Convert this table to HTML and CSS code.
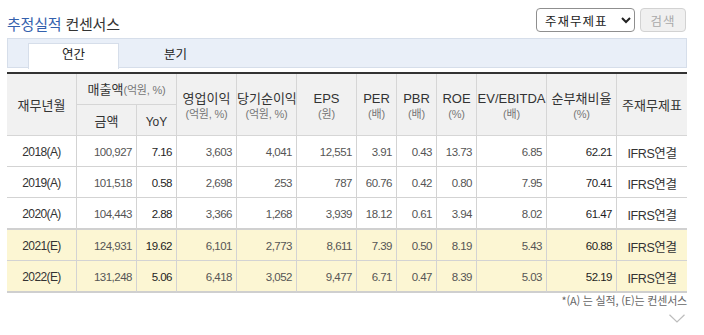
FILE: index.html
```html
<!DOCTYPE html>
<html lang="ko">
<head>
<meta charset="utf-8">
<title>추정실적 컨센서스</title>
<link rel="stylesheet" href="styles.css">
</head>
<body>
<div class="wrap">
  <div class="head">
    <h2 class="title"><span class="accent">추정실적</span> 컨센서스</h2>
    <div class="controls">
      <select class="sel">
        <option>주재무제표</option>
        <option>IFRS연결</option>
        <option>IFRS별도</option>
      </select>
      <button class="btn" type="button" disabled>검색</button>
    </div>
  </div>

  <div class="tabs">
    <a class="tab active">연간</a>
    <a class="tab">분기</a>
  </div>

  <table class="grid">
    <colgroup>
      <col class="w70"><col class="w60"><col class="w40"><col class="w60"><col class="w60"><col class="w60">
      <col class="w40"><col class="w40"><col class="w40"><col class="w70"><col class="w70"><col class="w70">
    </colgroup>
    <thead>
      <tr class="h1">
        <th rowspan="2">재무년월</th>
        <th colspan="2">매출액<span class="unit-in">(억원, %)</span></th>
        <th rowspan="2">영업이익<span class="unit">(억원, %)</span></th>
        <th rowspan="2">당기순이익<span class="unit">(억원, %)</span></th>
        <th rowspan="2">EPS<span class="unit">(원)</span></th>
        <th rowspan="2">PER<span class="unit">(배)</span></th>
        <th rowspan="2">PBR<span class="unit">(배)</span></th>
        <th rowspan="2">ROE<span class="unit">(%)</span></th>
        <th rowspan="2">EV/EBITDA<span class="unit">(배)</span></th>
        <th rowspan="2">순부채비율<span class="unit">(%)</span></th>
        <th rowspan="2" class="last">주재무제표</th>
      </tr>
      <tr class="h2">
        <th>금액</th>
        <th class="sm">YoY</th>
      </tr>
    </thead>
    <tbody>
      <tr>
        <td class="yr">2018(A)</td><td>100,927</td><td class="dk">7.16</td><td>3,603</td><td>4,041</td><td>12,551</td>
        <td>3.91</td><td>0.43</td><td>13.73</td><td>6.85</td><td class="dk">62.21</td><td class="std">IFRS연결</td>
      </tr>
      <tr>
        <td class="yr">2019(A)</td><td>101,518</td><td class="dk">0.58</td><td>2,698</td><td>253</td><td>787</td>
        <td>60.76</td><td>0.42</td><td>0.80</td><td>7.95</td><td class="dk">70.41</td><td class="std">IFRS연결</td>
      </tr>
      <tr class="split">
        <td class="yr">2020(A)</td><td>104,443</td><td class="dk">2.88</td><td>3,366</td><td>1,268</td><td>3,939</td>
        <td>18.12</td><td>0.61</td><td>3.94</td><td>8.02</td><td class="dk">61.47</td><td class="std">IFRS연결</td>
      </tr>
      <tr class="est">
        <td class="yr">2021(E)</td><td>124,931</td><td class="dk">19.62</td><td>6,101</td><td>2,773</td><td>8,611</td>
        <td>7.39</td><td>0.50</td><td>8.19</td><td>5.43</td><td class="dk">60.88</td><td class="std">IFRS연결</td>
      </tr>
      <tr class="est end">
        <td class="yr">2022(E)</td><td>131,248</td><td class="dk">5.06</td><td>6,418</td><td>3,052</td><td>9,477</td>
        <td>6.71</td><td>0.47</td><td>8.39</td><td>5.03</td><td class="dk">52.19</td><td class="std">IFRS연결</td>
      </tr>
    </tbody>
  </table>

  <p class="note">*(A) 는 실적, (E)는 컨센서스</p>
  <div class="more">
    <svg width="16" height="9" viewBox="0 0 16 9" aria-hidden="true">
      <polyline points="0.5,0.8 8,8 15.5,0.8" fill="none" stroke="#bdbdbd" stroke-width="1.2"/>
    </svg>
  </div>
</div>
</body>
</html>
```

FILE: styles.css
```css
* { box-sizing: border-box; }

html, body {
  margin: 0;
  padding: 0;
  background: #fff;
}

body {
  font-family: "Noto Sans CJK KR", "Noto Sans", sans-serif;
  color: #333;
  font-size: 12px;
}

.wrap {
  width: 680px;
  margin-left: 7px;
  padding-top: 8px;
}

.head {
  display: flex;
  justify-content: space-between;
  align-items: flex-end;
  height: 24px;
}

.title {
  margin: 0 0 -1px 0;
  font-size: 15px;
  line-height: 18px;
  font-weight: normal;
  letter-spacing: -0.2px;
  color: #333;
}

.title .accent {
  color: #3461ad;
}

.controls {
  display: flex;
  gap: 5px;
  align-self: stretch;
  margin-right: 1px;
}

.sel {
  width: 99px;
  height: 24px;
  font-family: "Noto Sans CJK KR", sans-serif;
  font-size: 12.5px;
  color: #222;
  border: 1px solid #8f8f8f;
  border-radius: 4px;
  background: #fff;
  padding: 0 2px 0 4px;
  letter-spacing: 1px;
}

.btn {
  width: 46px;
  height: 24px;
  font-family: "Noto Sans CJK KR", sans-serif;
  font-size: 12.5px;
  color: #a9a9a9;
  background: #f0f0f0;
  border: 1px solid #d2d2d2;
  border-radius: 4px;
  padding: 0;
  letter-spacing: 1px;
}

.tabs {
  display: flex;
  gap: 11px;
  margin-top: 6px;
  height: 30px;
  padding: 4px 0 0 20px;
  background: #e9eff8;
  border: 1px solid #d6deea;
}

.tab {
  width: 91px;
  height: 26px;
  margin-bottom: -1px;
  text-align: center;
  font-size: 12.5px;
  line-height: 20px;
  color: #222;
  border: 1px solid transparent;
  border-bottom: 0;
}

.tab.active {
  background: #fff;
  border-color: #d6deea;
}

.grid {
  margin-top: 4px;
  width: 680px;
  table-layout: fixed;
  border-collapse: separate;
  border-spacing: 0;
  border-top: 2px solid #333;
  font-family: "Liberation Sans", "Noto Sans CJK KR", sans-serif;
}

.w40 { width: 40px; }
.w60 { width: 60px; }
.w70 { width: 70px; }

.grid th {
  background: #f1f1f1;
  font-weight: normal;
  color: #333;
  font-size: 13px;
  line-height: 14px;
  padding: 1px 0 0;
  text-align: center;
  border-right: 1px solid #d6d6d6;
  border-bottom: 1px solid #d6d6d6;
  font-family: "Liberation Sans", "Noto Sans CJK KR", sans-serif;
  white-space: nowrap;
}

.grid th.last { border-right: 0; }
.grid th.sm { font-size: 12px; }

.grid .h1 th { height: 31px; }
.grid .h2 th { height: 31px; padding-top: 4px; }
.grid .h1 th[rowspan] { padding-top: 3px; }

.unit {
  display: block;
  margin-top: 1px;
  font-size: 11px;
  color: #777;
  letter-spacing: -0.2px;
}

.unit-in {
  font-size: 11px;
  color: #777;
  letter-spacing: -0.2px;
}

.grid td {
  height: 31px;
  padding: 2px 4px 0 0;
  text-align: right;
  font-size: 11.5px;
  letter-spacing: -0.5px;
  color: #555;
  border-right: 1px solid #d3d3d3;
  border-bottom: 1px solid #d3d3d3;
  white-space: nowrap;
}

.grid td.dk { color: #1e1e1e; }

.grid td.yr {
  text-align: center;
  padding-right: 0;
  color: #333;
  font-size: 12px;
  letter-spacing: -0.6px;
}

.grid td.std {
  text-align: center;
  padding-right: 0;
  color: #333;
  border-right: 0;
  font-size: 12.5px;
  letter-spacing: -0.4px;
}

.grid tr.split td {
  height: 32px;
  border-bottom: 2px solid #d0d0d0;
}

.grid tr.est td {
  background: #fcf6d3;
}

.grid tr.end td {
  height: 32px;
  border-bottom: 2px solid #cfcfcf;
}

.note {
  margin: 0;
  text-align: right;
  font-size: 11px;
  line-height: 15px;
  color: #666;
  letter-spacing: -0.2px;
}

.more {
  display: flex;
  justify-content: flex-end;
  padding-top: 6px;
  padding-right: 2px;
}

.more svg { display: block; }
```
